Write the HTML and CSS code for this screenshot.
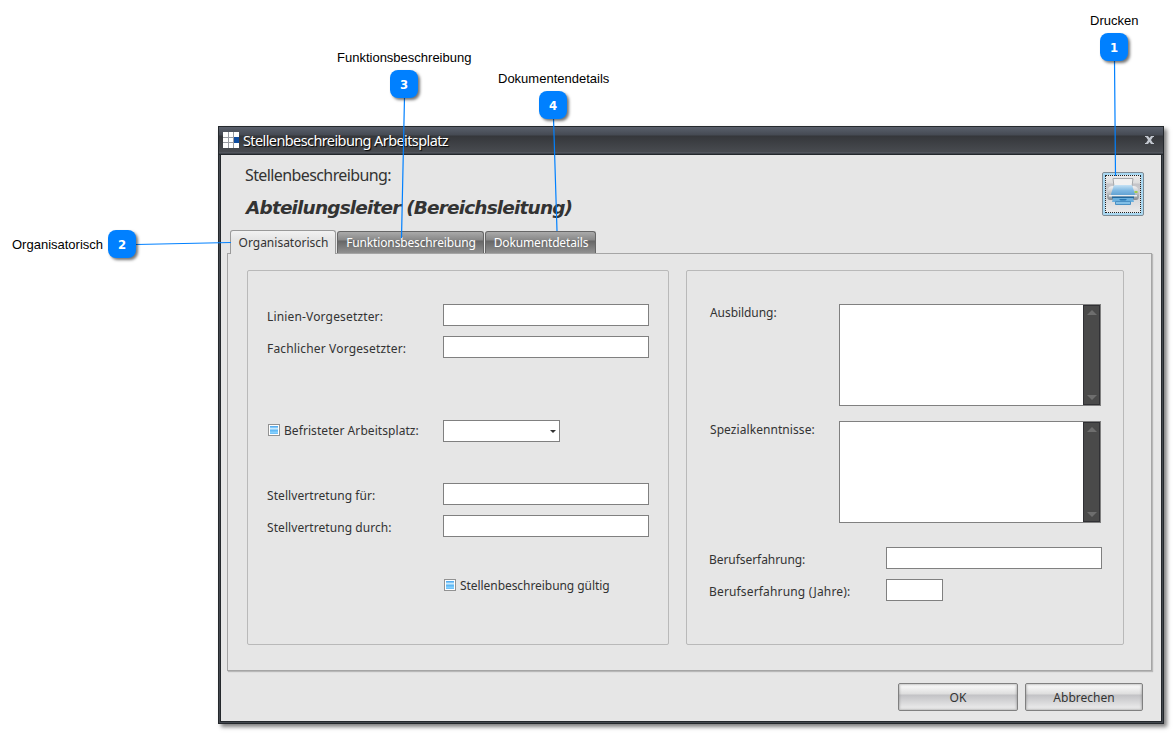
FILE: index.html
```html
<!DOCTYPE html>
<html lang="de">
<head>
  <meta charset="UTF-8" />
  <title>Stellenbeschreibung Arbeitsplatz</title>
  <meta name="viewport" content="width=device-width, initial-scale=1.0" />
  <link rel="stylesheet" href="styles.css">
</head>
<body>
  <div class="stage">
    <div class="window">
      <div class="titlebar">
        <svg class="logo" width="16" height="16" viewBox="0 0 16 16">
          <rect width="16" height="16" fill="#9a9da3"/>
          <path fill="#fff" d="M0 0h5v5H0zM6 0h4v5H6zM11 0h5v5h-5zM0 6h5v4H0zM6 6h4v4H6zM0 11h5v5H0zM6 11h4v5H6zM11 11h5v5h-5z"/>
          <rect x="11" y="5" width="5" height="6" fill="#0f4da0"/>
        </svg>
        <span class="title">Stellenbeschreibung Arbeitsplatz</span>
        <svg class="close" width="9" height="8" viewBox="0 0 9 8">
          <path fill="#c3c8d0" d="M0 0h3l1.500 2L6 0h3v1H8L6 4l2 3h1v1H6L4.500 6 3 8H0V7h1l2-3-2-3H0z"/>
        </svg>
      </div>

      <div class="content">
        <div class="header">
          <div class="header-text">
            <div class="subtitle">Stellenbeschreibung:</div>
            <h1>Abteilungsleiter (Bereichsleitung)</h1>
          </div>
          <button type="button" class="print" title="Drucken">
            <svg width="32" height="28" viewBox="0 0 32 28">
              <defs>
                <linearGradient id="blue" x1="0" y1="0" x2="0" y2="1">
                  <stop offset="0" stop-color="#c5e2f5"/>
                  <stop offset="0.5" stop-color="#7fb8e2"/>
                  <stop offset="1" stop-color="#5b9dd0"/>
                </linearGradient>
                <linearGradient id="grey" x1="0" y1="0" x2="0" y2="1">
                  <stop offset="0" stop-color="#f4f4f4"/>
                  <stop offset="1" stop-color="#898e94"/>
                </linearGradient>
              </defs>
              <path d="M1 11Q2 8 6 8h20q4 0 5 3l1 5v2q0 4-3 4H3q-3 0-3-4v-2z" fill="url(#grey)"/>
              <path d="M6 .5h20l-1 8H7z" fill="#f1f1f1" stroke="#a5a8ab"/>
              <path d="M7 7h18l3 9q0 2-2 2H6q-2 0-2-2z" fill="url(#blue)"/>
              <path d="M2 17h28v1.500H2z" fill="#e9edf0"/>
              <path d="M5 18.500h22v2H5z" fill="#22689d"/>
              <path d="M6 20h20l1 4H5z" fill="#6bb0de"/>
              <path d="M8.500 23.500h15v3h-15z" fill="#82bfe6" stroke="#4a90c4"/>
              <path d="M12 21h8l-1.500 1.500h-5z" fill="#2c78b2"/>
              <rect x="27.500" y="13" width="3" height="2" fill="#9fce4b"/>
            </svg>
          </button>
        </div>

        <div class="tabs">
          <div class="tab active"><span>Organisatorisch</span></div>
          <div class="tab"><span>Funktionsbeschreibung</span></div>
          <div class="tab"><span>Dokumentdetails</span></div>
        </div>

        <div class="panel">
          <form class="group group-left">
            <div class="row">
              <label class="l1" for="linie">Linien-Vorgesetzter:</label>
              <input type="text" id="linie" />
            </div>
            <div class="row">
              <label class="l2" for="fach">Fachlicher Vorgesetzter:</label>
              <input type="text" id="fach" />
            </div>
            <div class="row row-temp">
              <label class="l3"><i class="check"></i>Befristeter Arbeitsplatz:</label>
              <div class="select"></div>
            </div>
            <div class="row row-for">
              <label class="l4" for="fuer">Stellvertretung für:</label>
              <input type="text" id="fuer" />
            </div>
            <div class="row">
              <label class="l5" for="durch">Stellvertretung durch:</label>
              <input type="text" id="durch" />
            </div>
            <label class="valid"><i class="check"></i>Stellenbeschreibung gültig</label>
          </form>

          <form class="group group-right">
            <div class="row row-area">
              <label class="r1">Ausbildung:</label>
              <div class="area">
                <div class="scroll"><i class="up"></i><i class="down"></i></div>
              </div>
            </div>
            <div class="row row-area">
              <label class="r2">Spezialkenntnisse:</label>
              <div class="area">
                <div class="scroll"><i class="up"></i><i class="down"></i></div>
              </div>
            </div>
            <div class="row row-exp">
              <label class="r3" for="erfahrung">Berufserfahrung:</label>
              <input type="text" id="erfahrung" class="wide" />
            </div>
            <div class="row">
              <label class="r4" for="jahre">Berufserfahrung (Jahre):</label>
              <input type="text" id="jahre" class="short" />
            </div>
          </form>
        </div>

        <div class="actions">
          <button type="button" class="btn ok">OK</button>
          <button type="button" class="btn cancel">Abbrechen</button>
        </div>
      </div>
    </div>

    <!-- callouts -->
    <svg class="lines" width="1173" height="733" viewBox="0 0 1173 733">
      <path d="M1114.500 60L1115.500 176M136 244.500L231 242.500M404.500 97L401.500 238M553.500 118L557 231"/>
    </svg>
    <span class="note note1">Drucken</span>
    <span class="note note2">Organisatorisch</span>
    <span class="note note3">Funktionsbeschreibung</span>
    <span class="note note4">Dokumentendetails</span>
    <span class="badge badge1">1</span>
    <span class="badge badge2">2</span>
    <span class="badge badge3">3</span>
    <span class="badge badge4">4</span>
  </div>
</body>
</html>
```
FILE: styles.css
```css
* {
  box-sizing: border-box;
}
body {
  margin: 0;
  background: #fff;
  color: #333;
  font-family: "Noto Sans", "Open Sans", sans-serif;
  font-size: 12px;
}
.stage {
  position: relative;
  width: 1173px;
  height: 733px;
  padding: 126px 0 0 218px;
  overflow: hidden;
}
.window {
  width: 946px;
  height: 598px;
  border: 1px solid #24282c;
  padding: 0 1px 1px;
  background: #42474d;
  box-shadow: 3px 3px 4px rgba(0,0,0,0.5);
}
.titlebar {
  display: flex;
  align-items: center;
  height: 28px;
  margin: 0 -1px;
  padding: 0 9px 2px 4px;
  background: linear-gradient(#5a606c, #454a53 8px, #35373b 9px, #484b50 25px, #5c6069 26px, #24282c 27px);
  color: #fff;
}
.title {
  flex: 1;
  margin-left: 4px;
  font-size: 14.5px;
  letter-spacing: -0.6px;
  line-height: 20px;
  text-shadow: 1px 1px 1px #000;
  white-space: nowrap;
}
.content {
  height: 567px;
  margin: 0;
  border: 1px solid #24282c;
  border-top: 0;
  background: #e6e6e6;
  display: flex;
  flex-direction: column;
}
.header {
  display: flex;
  justify-content: space-between;
  height: 75px;
  padding: 17px 17px 0 24px;
}
.subtitle {
  font-size: 16px;
  letter-spacing: -0.6px;
  line-height: 20px;
  margin-top: -7px;
}
h1 {
  margin: 11px 0 0 1px;
  font: italic bold 18.5px/24px "DejaVu Sans", sans-serif;
  letter-spacing: -0.84px;
  white-space: nowrap;
}
.print {
  width: 42px;
  height: 44px;
  padding: 0;
  border: 1px solid #7f8b94;
  border-radius: 2px;
  background: linear-gradient(#eee, #ddd 10px, #c4c4c8 11px, #eee);
  box-shadow: inset 0 0 0 2px #a9d8f2;
  outline: 1px dotted #222;
  outline-offset: -4px;
}
.print svg {
  display: block;
  margin: -4px auto 0;
}
.tabs {
  display: flex;
  align-items: flex-end;
  gap: 1px;
  height: 24px;
  padding-left: 9px;
  margin-bottom: -1px;
  position: relative;
}
.tab {
  height: 22px;
  margin-bottom: 1px;
  padding-left: 1px;
  border: 1px solid #666;
  border-bottom: 0;
  border-radius: 3px 3px 0 0;
  background: linear-gradient(#aaa, #888 8px, #666 9px, #909090);
  color: #fff;
  line-height: 22px;
  letter-spacing: -0.14px;
  text-align: center;
  white-space: nowrap;
}
.tab:nth-child(1) { width: 106px; }
.tab:nth-child(2) { width: 147px; }
.tab:nth-child(3) { width: 111px; }
.tab.active {
  height: 24px;
  margin-bottom: 0;
  border-color: #999;
  background: linear-gradient(#f2f2f2, #e6e6e6 8px);
  color: #333;
  line-height: 24px;
  letter-spacing: 0;
}
.panel {
  display: flex;
  gap: 17px;
  width: 925px;
  height: 418px;
  margin-left: 6px;
  padding: 16px 0 0 19px;
  border: 1px solid #a5a5a5;
  box-shadow: 1px 1px 1px rgba(0,0,0,0.2);
}
.group {
  height: 375px;
  border: 1px solid #b9b9b9;
  border-radius: 2px;
}
.group-left {
  width: 422px;
  padding: 33px 19px 0;
}
.group-right {
  width: 438px;
  padding: 33px 21px 0 22px;
}
.row {
  display: flex;
  justify-content: space-between;
  height: 22px;
  margin-bottom: 10px;
}
label {
  line-height: 25px;
  white-space: nowrap;
}
.l1, .l2, .r4 { letter-spacing: 0.16px; }
.l3, .l4, .l5, .r2 { letter-spacing: 0.07px; }
.valid, .r1, .r3 { letter-spacing: -0.06px; }
input,
.select {
  width: 206px;
  height: 22px;
  padding: 0 3px;
  border: 1px solid #808080;
  background: #fff;
}
.row-temp {
  margin-top: 62px;
}
.row-temp label {
  line-height: 22px;
}
.select {
  width: 117px;
  margin-right: 89px;
  display: flex;
  justify-content: flex-end;
  align-items: center;
}
.select::after {
  content: "";
  border: 3px solid transparent;
  border-top-color: #333;
  border-bottom: 0;
  margin-top: 1px;
}
.row-for {
  margin-top: 41px;
}
.check {
  display: inline-block;
  width: 12px;
  height: 12px;
  margin: 0 4px 0 1px;
  border: 1px solid #929292;
  background: linear-gradient(#57aef0 1px, #b5e0fb 2px, #d9f2ff 3px, #57b3f3 4px, #8fd6ff 7px, #57aef0) center / 8px 8px no-repeat #fff;
  vertical-align: -1px;
}
.valid {
  display: block;
  margin: 38px 0 0 176px;
  line-height: 21px;
}
.row-area {
  height: 102px;
  margin-bottom: 15px;
}
.row-area label {
  line-height: 17px;
  padding-left: 1px;
}
.area {
  display: flex;
  justify-content: flex-end;
  width: 262px;
  height: 102px;
  margin-right: 1px;
  border: 1px solid #808080;
  background: #fff;
}
.scroll {
  display: flex;
  flex-direction: column;
  justify-content: space-between;
  align-items: center;
  width: 17px;
  padding: 4px 0;
  border: 1px solid #303034;
  background: #4a4a4a;
}
.up,
.down {
  border: 5px solid transparent;
}
.up {
  border-top: 0;
  border-bottom-color: #6e6e6e;
}
.down {
  border-bottom: 0;
  border-top-color: #6e6e6e;
}
.row-exp {
  margin-top: 24px;
}
.wide {
  width: 216px;
}
.short {
  width: 57px;
  margin-right: 159px;
}
.actions {
  display: flex;
  justify-content: flex-end;
  gap: 7px;
  padding: 12px 18px 0 0;
}
.btn {
  height: 28px;
  padding: 0;
  border: 1px solid #808080;
  border-radius: 2px;
  background: linear-gradient(#fff, #ddd 10px, #c2c2c5 11px, #f0f0f0);
  box-shadow: inset 0 0 2px 1px rgba(130,130,130,0.45);
  color: #333;
  font-family: inherit;
  font-size: 12px;
}
.ok { width: 120px; }
.cancel { width: 118px; }

.lines {
  position: absolute;
  left: 0;
  top: 0;
  fill: none;
  stroke: #0080ff;
  stroke-width: 1.2;
}
.note {
  position: absolute;
  color: #000;
  font: 13px/16px "Liberation Sans", Arial, sans-serif;
  white-space: nowrap;
}
.note1 { left: 1090px; top: 13px; }
.note2 { left: 12px; top: 237px; }
.note3 { left: 337px; top: 50px; }
.note4 { left: 498px; top: 71px; }
.badge {
  position: absolute;
  width: 28px;
  height: 28px;
  border-radius: 8px;
  background: #0080ff;
  box-shadow: 2px 2px 3px rgba(0,0,0,0.55);
  color: #fff;
  font: bold 13px/30px "DejaVu Sans Condensed", "DejaVu Sans", sans-serif;
  text-align: center;
}
.badge1 { left: 1100px; top: 33px; }
.badge2 { left: 108px; top: 230px; }
.badge3 { left: 390px; top: 70px; }
.badge4 { left: 539px; top: 91px; }
```
